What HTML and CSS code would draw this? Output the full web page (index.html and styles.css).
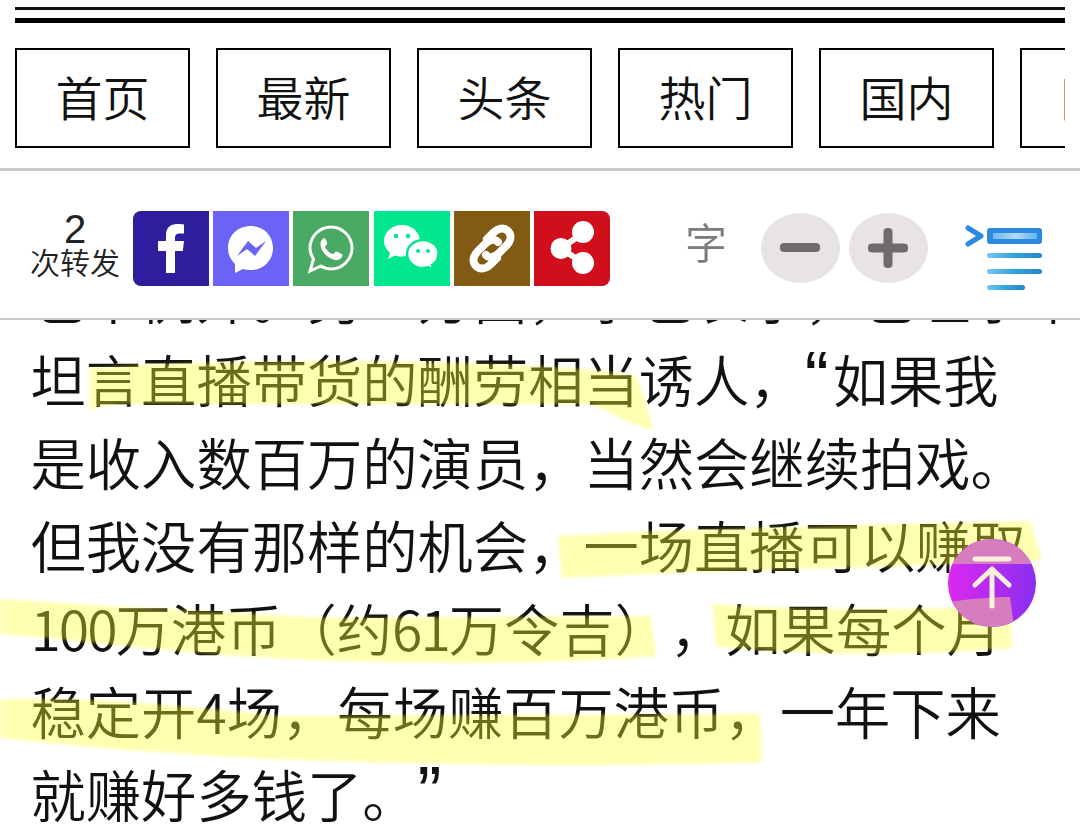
FILE: index.html
```html
<!DOCTYPE html>
<html lang="zh-CN">
<head>
    <meta charset="UTF-8">
    <meta name="viewport" content="width=device-width, initial-scale=1.0">
    <title>首页</title>
    <link rel="stylesheet" href="styles.css">
</head>
<body>
    <header class="masthead">
        <div class="rule-thin"></div>
        <div class="rule-thick"></div>
        <nav class="nav">
            <a class="nav-item">首页</a>
            <a class="nav-item">最新</a>
            <a class="nav-item">头条</a>
            <a class="nav-item">热门</a>
            <a class="nav-item">国内</a>
            <a class="nav-item">国际</a>
        </nav>
    </header>

    <section class="toolbar">
        <div class="shares">
            <span class="share-num">2</span>
            <span class="share-label">次转发</span>
        </div>
        <div class="share-buttons">
            <a class="share-btn fb">
                <svg viewBox="0 0 76 75" width="76" height="75"><path fill="#fff" d="M33 62V40H25V30h8v-6c0-7 4-11 11-11 3 0 6 .3 7 .5v9h-4c-4 0-5 2-5 4.500V30h9l-1.200 10H42v22z"/></svg>
            </a>
            <a class="share-btn ms">
                <svg viewBox="0 0 76 75" width="76" height="75"><path fill="#fff" d="M38 15c-13 0-23 9-23 22 0 7 3 12 7 16v9l8-4c2.500.6 5 1 8 1 13 0 22-10 22-22S51 15 38 15z"/><path fill="#6a63f6" d="M24 45l11-15 8 7 10-7-11 15-8-7z"/></svg>
            </a>
            <a class="share-btn wa">
                <svg viewBox="0 0 76 75" width="76" height="75"><path fill="none" stroke="#fff" stroke-width="3" d="M17 60l3.500-12C18 44 17 41 17 37c0-12 10-21 21-21s21 9 21 21-10 21-21 21c-4 0-7-1-10-3z"/><path fill="#fff" d="M32 27c-2 0-4.500 2.500-4.500 6 0 8 9 16 16 16 3.500 0 6-2.500 6-5 0-1-5.500-3.500-6.500-3.500-1 0-2 2.500-3 2.500-2.500 0-7-4.500-8-7 0-1.500 2.200-2.200 2.200-3.500 0-1-1.700-5.500-2.700-5.500z"/></svg>
            </a>
            <a class="share-btn wc">
                <svg viewBox="0 0 76 75" width="76" height="75"><path fill="#fff" d="M28 14c-10 0-18 7-18 16 0 5 3 9 6 12l-2 6 7-3.500c2 .6 4 1 7 1 10 0 18-7 18-15.500S38 14 28 14z"/><path fill="#fff" stroke="#00e78f" stroke-width="2.500" d="M49 29c-9 0-16 6.500-16 14s7 14 16 14c2 0 3.500-.3 5-.9l5.500 3-1.500-5c4-2.500 6.500-6.500 6.500-11.100C65 35.500 58 29 49 29z"/><circle cx="22" cy="25" r="2.300" fill="#00e78f"/><circle cx="34" cy="25" r="2.300" fill="#00e78f"/><circle cx="44" cy="40" r="2" fill="#00e78f"/><circle cx="54" cy="40" r="2" fill="#00e78f"/></svg>
            </a>
            <a class="share-btn ln">
                <svg viewBox="0 0 76 75" width="76" height="75"><g fill="none" stroke="#fff" stroke-width="8" stroke-linecap="round"><path d="M33 28l6-6c5-5 11-6 15-2s3 10-2 15l-7 7c-5 5-10 5-13 2"/><path d="M43 47l-6 6c-5 5-11 6-15 2s-3-10 2-15l7-7c5-5 10-5 13-2"/></g></svg>
            </a>
            <a class="share-btn sh">
                <svg viewBox="0 0 76 75" width="76" height="75"><path fill="none" stroke="#fff" stroke-width="6" d="M27 37.500L49 22M27 37.500L49 52"/><circle cx="49" cy="21" r="11" fill="#fff"/><circle cx="27" cy="37.500" r="10.500" fill="#fff"/><circle cx="49" cy="52" r="11" fill="#fff"/></svg>
            </a>
        </div>
        <span class="font-label">字</span>
        <div class="font-controls">
            <a class="font-btn"><svg viewBox="0 0 40 10" width="40" height="10"><rect width="40" height="9" rx="4" fill="#706b6b"/></svg></a>
            <a class="font-btn"><svg viewBox="0 0 40 40" width="40" height="40"><rect y="15.500" width="40" height="9" rx="4" fill="#706b6b"/><rect x="15.500" width="9" height="40" rx="4" fill="#706b6b"/></svg></a>
        </div>
        <svg class="toc-icon" viewBox="0 0 78 66" width="78" height="66">
            <defs>
                <linearGradient id="tocLine"><stop offset="0" stop-color="#74c6ea"/><stop offset=".5" stop-color="#2fa4dc"/><stop offset="1" stop-color="#2a82d4"/></linearGradient>
                <linearGradient id="tocInner"><stop offset="0" stop-color="#6fb6ee"/><stop offset=".5" stop-color="#b5dcf5"/><stop offset="1" stop-color="#62b4ea"/></linearGradient>
            </defs>
            <path fill="none" stroke="#2a8ae0" stroke-width="5" stroke-linecap="round" stroke-linejoin="round" d="M3 3l13 8-13 8"/>
            <rect x="22" y="3" width="55" height="16" rx="3" fill="#2a8ae0"/>
            <rect x="28" y="8" width="44" height="6" fill="url(#tocInner)"/>
            <rect x="22" y="28" width="55" height="5" rx="2.500" fill="url(#tocLine)"/>
            <rect x="22" y="44" width="55" height="5" rx="2.500" fill="url(#tocLine)"/>
            <rect x="22" y="60" width="38" height="5" rx="2.500" fill="url(#tocLine)"/>
        </svg>
    </section>

    <main class="article">
        <div class="lines">
            <p class="line">也不例外。另一方面，李也表示，也坦承平时</p>
            <p class="line">坦言直播带货的酬劳相当诱人，<span class="quote">“</span>如果我</p>
            <p class="line">是收入数百万的演员，当然会继续拍戏。</p>
            <p class="line">但我没有那样的机会，一场直播可以赚取</p>
            <p class="line"><span class="digits">100</span>万港币（约<span class="digits">61</span>万令吉），如果每个月</p>
            <p class="line">稳定开4场，每场赚百万港币，一年下来</p>
            <p class="line">就赚好多钱了。<span class="quote">”</span></p>
        </div>
        <!-- marker strokes, page coordinates minus article top (321) -->
        <svg class="marks" viewBox="0 0 1080 513" width="1080" height="513">
            <defs><filter id="soft" x="-2%" y="-10%" width="104%" height="120%"><feGaussianBlur stdDeviation="1.500"/></filter></defs>
            <g fill="#ffff30" fill-opacity=".38" filter="url(#soft)">
                <path d="M90 48C220 38 540 38 636 56L646 84L653 110C630 106 610 90 590 84L120 84Q100 86 90 90Z"/>
                <path d="M558 216C700 208 900 204 1030 201L1042 240C900 248 700 250 562 258Z"/>
                <path d="M0 279C100 286 220 292 330 298L650 296L656 336C540 346 360 344 240 336C150 330 60 318 0 314Z"/>
                <path d="M712 284C780 290 940 292 1010 284L1012 328C920 336 800 336 716 326Z"/>
                <path d="M0 380C60 376 150 382 280 396L760 394L762 442C600 448 300 444 160 432C90 428 40 422 0 418Z"/>
            </g>
        </svg>
        <a class="to-top">
            <svg viewBox="0 0 88 88" width="88" height="88">
                <defs>
                    <linearGradient id="topFill"><stop offset="0" stop-color="#dc28f0"/><stop offset="1" stop-color="#8a2ff0"/></linearGradient>
                    <clipPath id="topClip"><circle cx="44" cy="44" r="44"/></clipPath>
                </defs>
                <circle cx="44" cy="44" r="44" fill="url(#topFill)"/>
                <g clip-path="url(#topClip)" fill="#d87cc0">
                    <rect width="88" height="25"/>
                    <path d="M0 63C20 60 45 58 62 58L66 88H0Z"/>
                </g>
                <g fill="none" stroke="#fdf0dc" stroke-width="5" stroke-linecap="round" stroke-linejoin="round">
                    <path d="M27 20H61"/>
                    <path d="M27 46L44 30L61 46M44 30V67"/>
                </g>
            </svg>
        </a>
    </main>
</body>
</html>
```

FILE: styles.css
```css
html, body {
    margin: 0;
    padding: 0;
}
body {
    width: 1080px;
    height: 834px;
    overflow: hidden;
    background: #fff;
    color: #111;
    font-family: "Liberation Sans", "Noto Sans CJK SC", sans-serif;
}
.masthead {
    padding: 7px 15px 0;
    height: 161px;
    border-bottom: 3px solid #c9c9c9;
}
.rule-thin {
    height: 3px;
    background: #111;
}
.rule-thick {
    height: 5px;
    margin-top: 8px;
    background: #000;
}
.nav {
    display: flex;
    gap: 26px;
    margin-top: 25px;
    overflow: hidden;
}
.nav-item {
    flex: 0 0 175px;
    height: 100px;
    box-sizing: border-box;
    border: 2px solid #000;
    padding-bottom: 5px;
    display: flex;
    align-items: center;
    justify-content: center;
    font-family: "Noto Sans CJK SC", sans-serif;
    font-size: 47px;
    font-weight: 350;
}
.toolbar {
    display: flex;
    align-items: center;
    height: 147px;
    border-bottom: 2px solid #c9c9c9;
}
.shares {
    width: 90px;
    margin-left: 30px;
    margin-top: 1px;
    display: flex;
    flex-direction: column;
    align-items: center;
    font-family: "Noto Sans CJK SC", sans-serif;
    color: #222;
}
.share-num {
    font-family: "Liberation Sans", sans-serif;
    font-size: 40px;
    line-height: 31px;
}
.share-label {
    font-size: 30px;
    font-weight: 350;
    line-height: 32px;
    white-space: nowrap;
}
.share-buttons {
    display: flex;
    gap: 4.200px;
    margin-left: 13px;
    margin-top: 8px;
    border-radius: 8px;
    overflow: hidden;
}
.share-btn {
    width: 76px;
    height: 75px;
    display: block;
}
.share-btn svg {
    display: block;
}
.fb { background: #2c1e9c; }
.ms { background: #6a63f6; }
.wa { background: #4aa963; }
.wc { background: #00e78f; }
.ln { background: #835a14; }
.sh { background: #d00e1c; }
.font-label {
    margin-left: 75px;
    margin-top: -9px;
    font-family: "Noto Sans CJK SC", sans-serif;
    font-size: 42px;
    font-weight: 350;
    color: #7c7c7c;
}
.font-controls {
    display: flex;
    gap: 9px;
    margin-left: 34px;
    margin-top: 6px;
}
.font-btn {
    width: 79px;
    height: 70px;
    border-radius: 50%;
    background: #e8e4e4;
    display: flex;
    align-items: center;
    justify-content: center;
}
.toc-icon {
    margin-left: 37px;
    margin-top: 26px;
}
.article {
    position: relative;
    height: 513px;
    overflow: hidden;
}
.lines {
    margin-top: -66px;
    padding-left: 30.500px;
    font-family: "Noto Sans CJK SC", sans-serif;
    font-size: 55.300px;
    font-weight: 350;
    line-height: 83px;
    text-spacing-trim: space-all;
    color: #111;
}
.line {
    margin: 0;
    white-space: nowrap;
}
.quote {
    font-family: "Liberation Sans", sans-serif;
    font-size: 72px;
    line-height: 0;
    letter-spacing: 4px;
}
.digits {
    letter-spacing: -2px;
}
.marks {
    position: absolute;
    left: 0;
    top: 0;
}
.to-top {
    position: absolute;
    left: 948px;
    top: 219px;
    width: 88px;
    height: 88px;
}
.to-top svg {
    display: block;
}
```
